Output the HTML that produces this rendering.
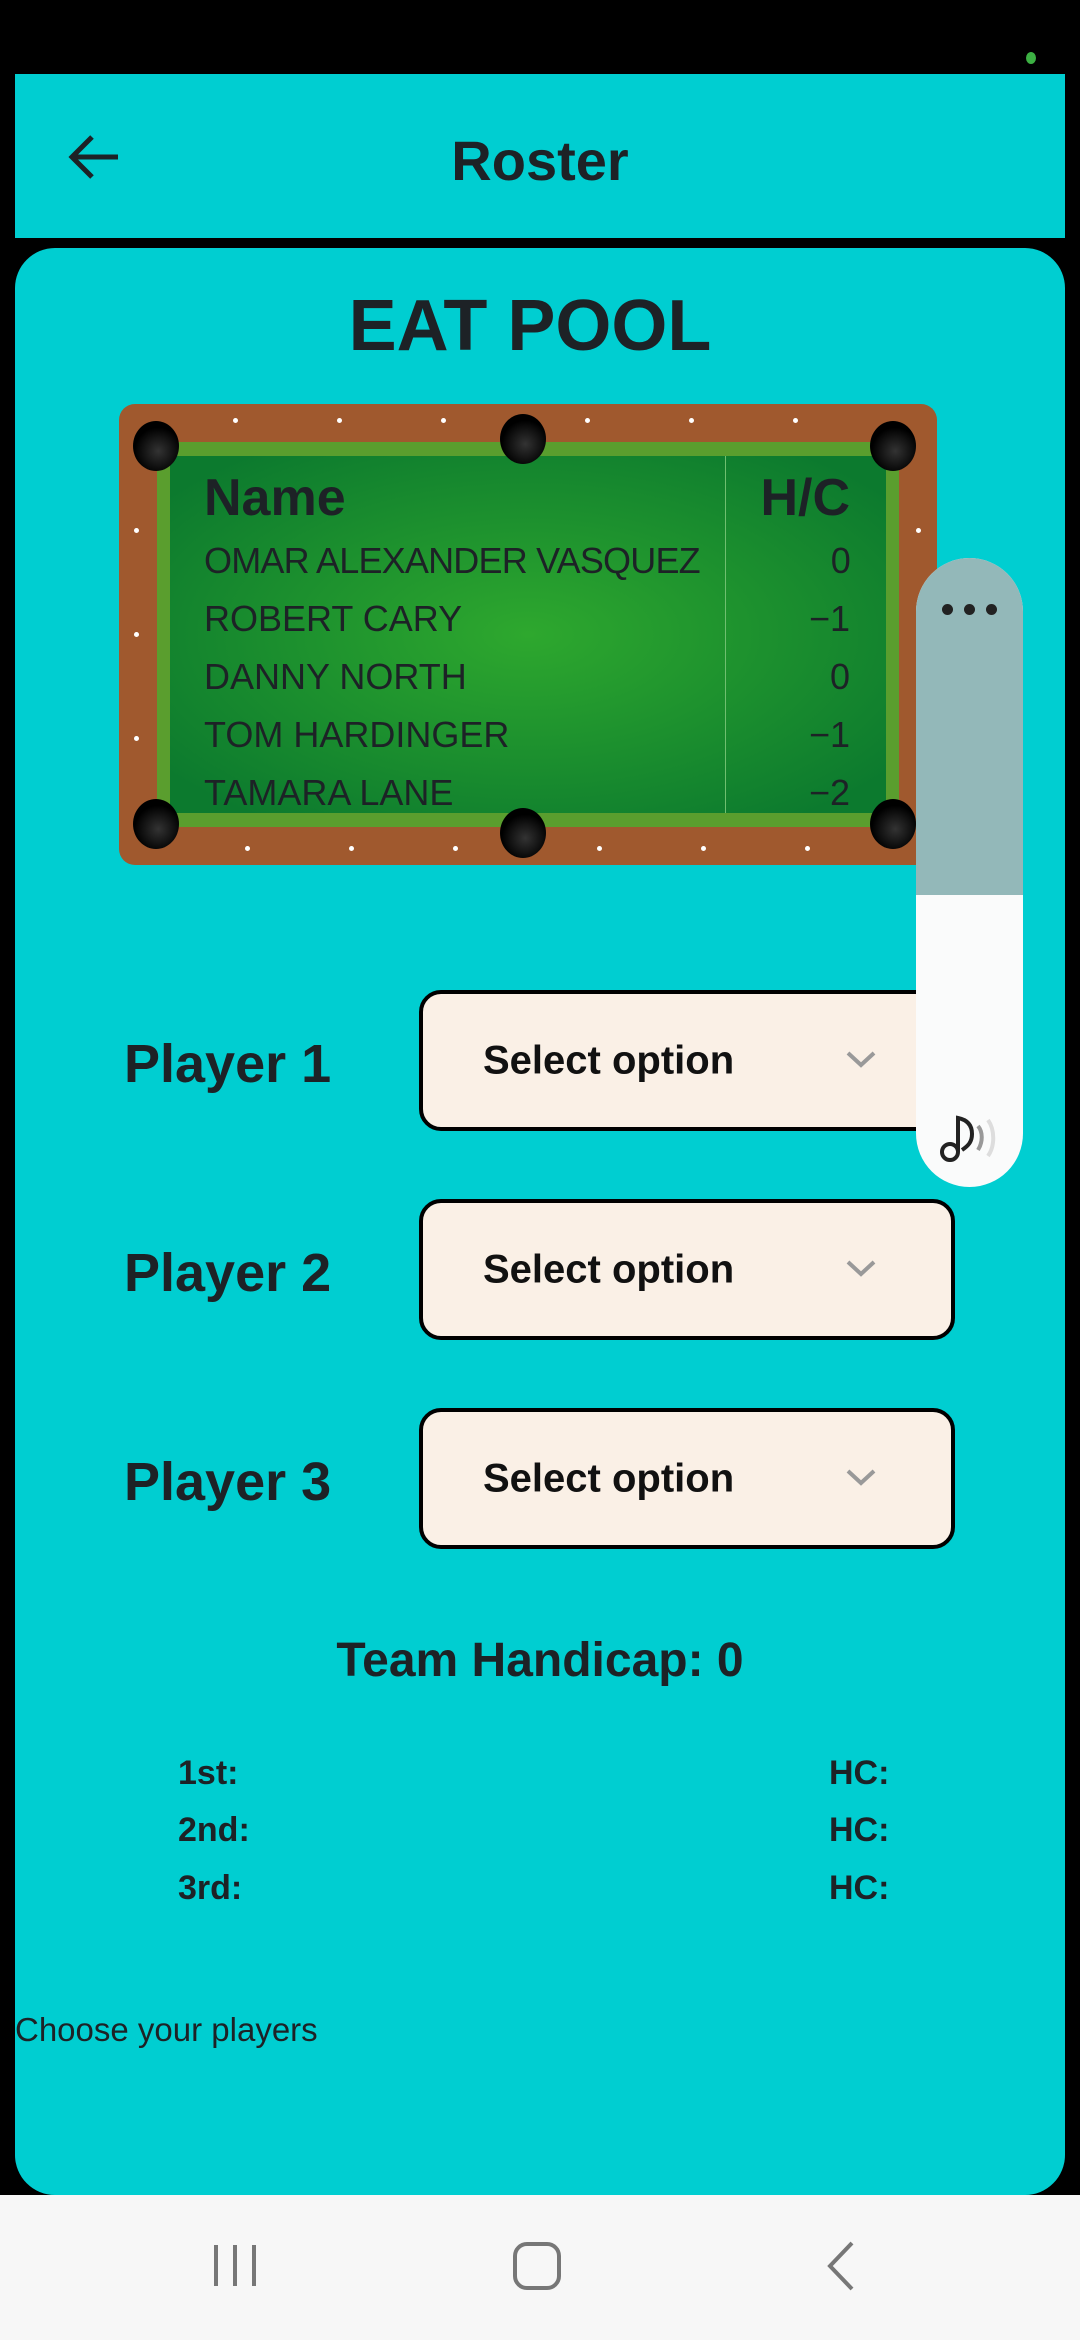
<!DOCTYPE html>
<html><head><meta charset="utf-8"><style>
*{margin:0;padding:0;box-sizing:border-box}
body{width:1080px;height:2340px;background:#000;position:relative;overflow:hidden;font-family:"Liberation Sans",sans-serif;color:#1d2226}
.abs{position:absolute}
.t{position:absolute;white-space:nowrap;line-height:1}
.sel{position:absolute;left:419px;width:536px;height:141px;border:4px solid #000;border-radius:22px;background:#faf0e6}
.sel span{position:absolute;left:60px;top:50%;transform:translateY(-50%);font-size:40px;color:#111;font-weight:bold}
.sel svg{position:absolute;left:420px;top:54px}
.pl{position:absolute;left:124px;font-size:54px;font-weight:bold;color:#1d2226}
.row{position:absolute;left:204px;width:646px;font-size:36px;line-height:1}
.row b{font-weight:inherit;position:absolute;right:0;top:0}
.dot{position:absolute;width:5px;height:5px;border-radius:50%;background:#fff}
.pk{position:absolute;width:46px;height:50px;border-radius:50%;background:radial-gradient(circle at 55% 60%,#333,#000 60%)}
</style></head><body>
<div class="abs" style="left:1026px;top:52px;width:10px;height:12px;border-radius:50%;background:#3cb043"></div>
<div class="abs" style="left:15px;top:74px;width:1050px;height:164px;background:#00ced1"></div>
<svg class="abs" style="left:66px;top:132px" width="56" height="50" viewBox="0 0 56 50"><path d="M52 25H6M26 5L6 25l20 20" fill="none" stroke="#1d2226" stroke-width="5"/></svg>
<div class="t" style="left:0;width:1080px;text-align:center;top:133px;font-size:56px;font-weight:bold">Roster</div>
<div class="abs" style="left:15px;top:248px;width:1050px;height:1947px;background:#00ced1;border-radius:40px"></div>
<div class="t" style="left:0;width:1060px;text-align:center;top:290px;font-size:72px;font-weight:bold">EAT POOL</div>
<div class="abs" style="left:119px;top:404px;width:818px;height:461px;background:#a0592e;border-radius:16px"></div>
<div class="abs" style="left:157px;top:442px;width:742px;height:385px;background:#5a9e2e"></div>
<div class="abs" style="left:170px;top:456px;width:716px;height:357px;background:radial-gradient(ellipse at 50% 50%,#2ea82e,#0c7a2e 90%)"></div>
<div class="abs" style="left:725px;top:456px;width:1px;height:357px;background:#6fbf6f"></div>
<div class="dot" style="left:233px;top:418px"></div><div class="dot" style="left:337px;top:418px"></div><div class="dot" style="left:441px;top:418px"></div><div class="dot" style="left:585px;top:418px"></div><div class="dot" style="left:689px;top:418px"></div><div class="dot" style="left:793px;top:418px"></div>
<div class="dot" style="left:245px;top:846px"></div><div class="dot" style="left:349px;top:846px"></div><div class="dot" style="left:453px;top:846px"></div><div class="dot" style="left:597px;top:846px"></div><div class="dot" style="left:701px;top:846px"></div><div class="dot" style="left:805px;top:846px"></div>
<div class="dot" style="left:134px;top:528px"></div><div class="dot" style="left:134px;top:632px"></div><div class="dot" style="left:134px;top:736px"></div>
<div class="dot" style="left:916px;top:528px"></div>
<div class="pk" style="left:133px;top:421px"></div><div class="pk" style="left:500px;top:414px"></div><div class="pk" style="left:870px;top:421px"></div>
<div class="pk" style="left:133px;top:799px"></div><div class="pk" style="left:500px;top:808px"></div><div class="pk" style="left:870px;top:799px"></div>
<div class="row" style="top:472px;font-size:52px;font-weight:bold">Name<b>H/C</b></div>
<div class="row" style="top:543px;font-size:36px;letter-spacing:-0.8px">OMAR ALEXANDER VASQUEZ<b>0</b></div>
<div class="row" style="top:601px">ROBERT CARY<b>−1</b></div>
<div class="row" style="top:659px">DANNY NORTH<b>0</b></div>
<div class="row" style="top:717px">TOM HARDINGER<b>−1</b></div>
<div class="row" style="top:775px">TAMARA LANE<b>−2</b></div>
<div class="pl" style="top:1033px">Player 1</div>
<div class="pl" style="top:1242px">Player 2</div>
<div class="pl" style="top:1451px">Player 3</div>
<div class="sel" style="top:990px"><span>Select option</span><svg width="36" height="22"><path d="M5 5l13 12 13-12" fill="none" stroke="#999" stroke-width="4"/></svg></div>
<div class="sel" style="top:1199px"><span>Select option</span><svg width="36" height="22"><path d="M5 5l13 12 13-12" fill="none" stroke="#999" stroke-width="4"/></svg></div>
<div class="sel" style="top:1408px"><span>Select option</span><svg width="36" height="22"><path d="M5 5l13 12 13-12" fill="none" stroke="#999" stroke-width="4"/></svg></div>
<div class="t" style="left:0;width:1080px;text-align:center;top:1637px;font-size:48px;font-weight:bold">Team Handicap: 0</div>
<div class="t" style="left:178px;top:1756px;font-size:34px;font-weight:bold">1st:</div>
<div class="t" style="left:178px;top:1813px;font-size:34px;font-weight:bold">2nd:</div>
<div class="t" style="left:178px;top:1871px;font-size:34px;font-weight:bold">3rd:</div>
<div class="t" style="left:829px;top:1756px;font-size:34px;font-weight:bold">HC:</div>
<div class="t" style="left:829px;top:1813px;font-size:34px;font-weight:bold">HC:</div>
<div class="t" style="left:829px;top:1871px;font-size:34px;font-weight:bold">HC:</div>
<div class="t" style="left:15px;top:2013px;font-size:33px">Choose your players</div>
<div class="abs" style="left:916px;top:558px;width:107px;height:629px;border-radius:54px;overflow:hidden;background:#fafbfb">
<div style="height:337px;background:#93b8b9"></div></div>
<div class="abs" style="left:942px;top:604px;width:11px;height:11px;border-radius:50%;background:#222"></div>
<div class="abs" style="left:964px;top:604px;width:11px;height:11px;border-radius:50%;background:#222"></div>
<div class="abs" style="left:986px;top:604px;width:11px;height:11px;border-radius:50%;background:#222"></div>
<svg class="abs" style="left:936px;top:1108px" width="70" height="60" viewBox="0 0 70 60"><circle cx="14" cy="44" r="8" fill="none" stroke="#222" stroke-width="4"/><path d="M22 44V10c10 2 14 8 14 16s-4 12-10 16" fill="none" stroke="#222" stroke-width="4"/><path d="M42 18c5 6 5 16 0 24" fill="none" stroke="#999" stroke-width="4"/><path d="M52 12c7 10 7 26 0 36" fill="none" stroke="#ddd" stroke-width="4"/></svg>
<div class="abs" style="left:0;top:2195px;width:1080px;height:145px;background:#f7f7f7"></div>
<svg class="abs" style="left:0;top:2195px" width="1080" height="145"><g fill="none" stroke="#777" stroke-width="4"><path d="M216 50v41M235 50v41M254 50v41"/><rect x="515" y="49" width="44" height="44" rx="12"/><path d="M852 48l-22 23 22 23"/></g></svg>
</body></html>
